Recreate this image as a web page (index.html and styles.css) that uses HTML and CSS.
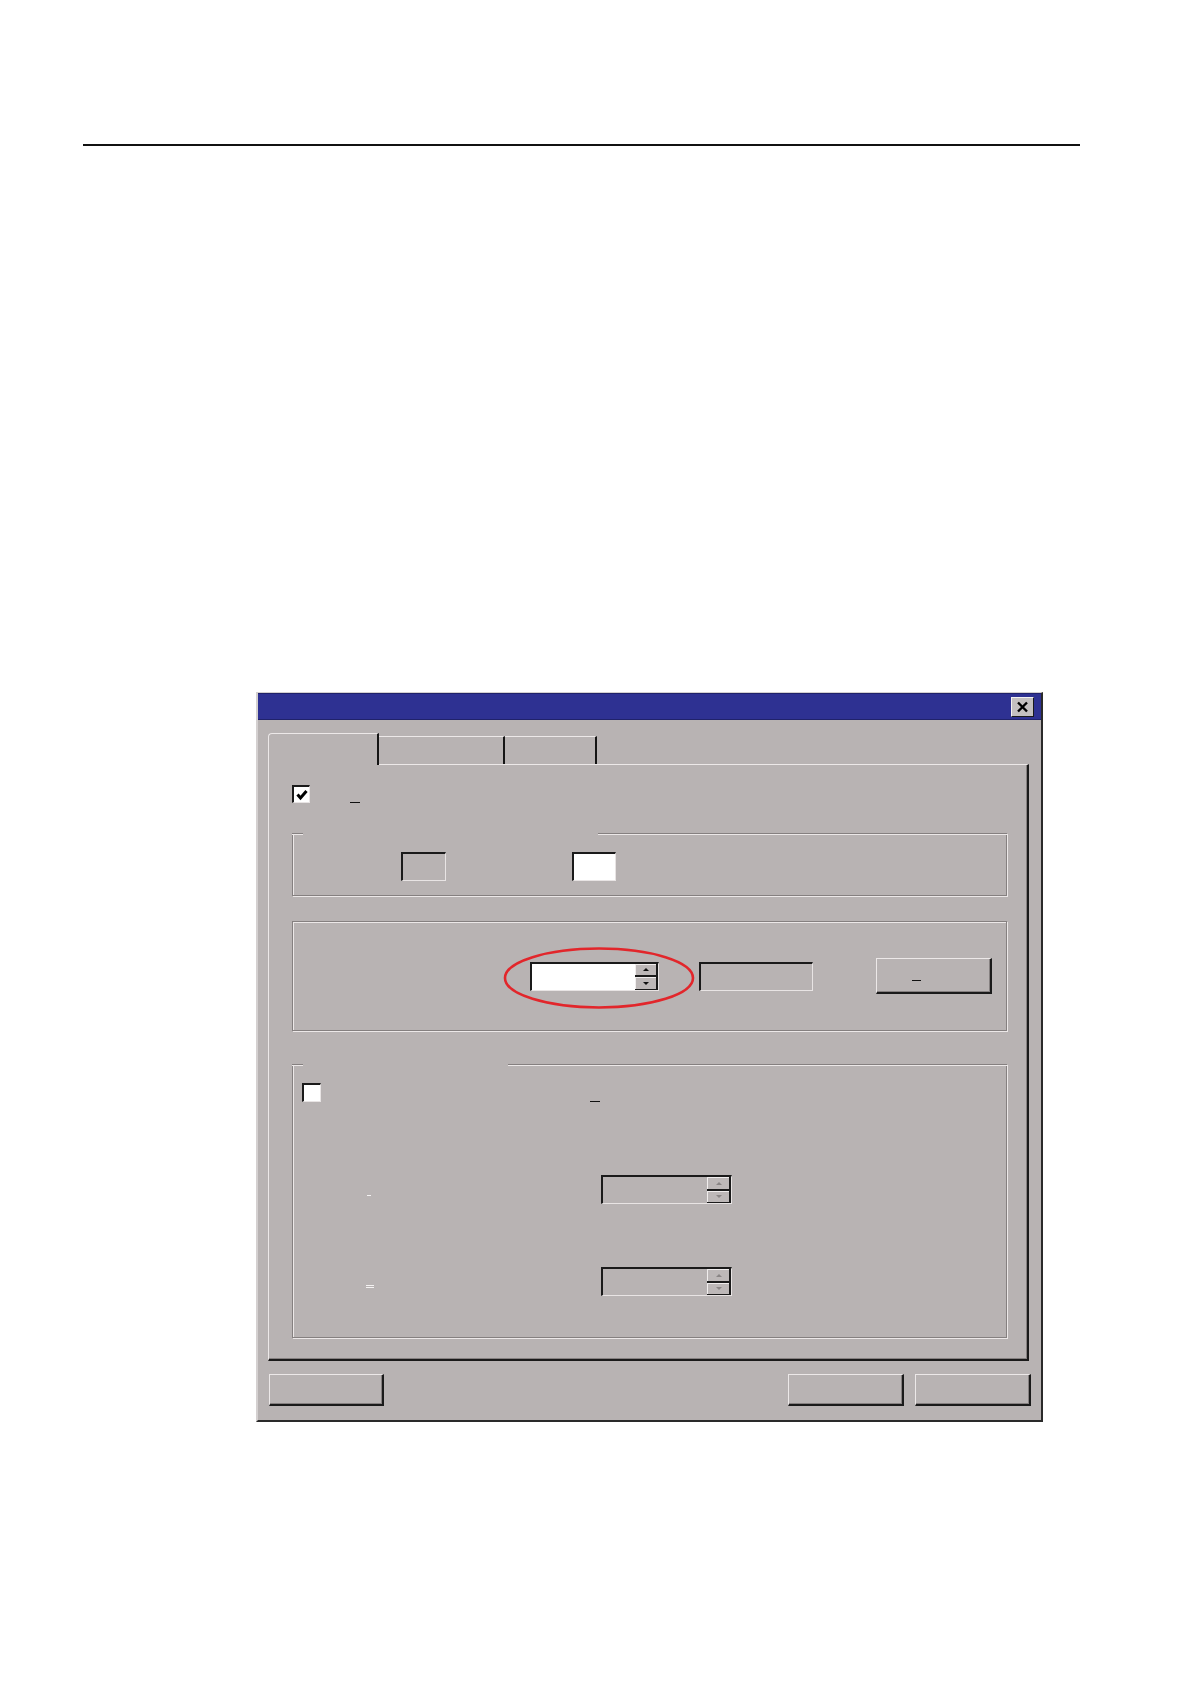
FILE: index.html
```html
<!DOCTYPE html>
<html>
<head>
<meta charset="utf-8">
<link rel="stylesheet" href="styles.css">
</head>
<body>
<div class="rule"></div>
<div class="dialog">
  <div class="titlebar">
    <button class="close"><svg width="13" height="12" viewBox="0 0 13 12"><path d="M2 1.5 L11 10.5 M11 1.5 L2 10.5" stroke="#000" stroke-width="2.4" fill="none"/></svg></button>
  </div>
  <div class="tabs">
    <div class="tab active"></div>
    <div class="tab t2"></div>
    <div class="tab t3"></div>
  </div>
  <div class="panel">
    <div class="chkrow">
      <span class="chk"><svg width="14" height="14" viewBox="0 0 14 14"><path d="M2.5 6.5 L5.5 10 L11.5 3" stroke="#000" stroke-width="3" fill="none"/></svg></span>
      <span class="mn m1"></span>
    </div>
    <div class="group g1">
      <div class="gtop"><i class="ln a"></i><i class="sp s1"></i><i class="ln b"></i></div>
      <div class="g1row">
        <span class="field box1"></span>
        <span class="field box2"></span>
      </div>
    </div>
    <div class="group full g2">
      <div class="g2row">
        <div class="spin white">
          <span class="txt"></span>
          <span class="btns"><i class="sb up"></i><i class="sb down"></i></span>
        </div>
        <span class="field box3"></span>
        <button class="btn wide"><span class="mn m2"></span></button>
      </div>
      <svg class="ellipse" width="196" height="66" viewBox="0 0 196 66"><ellipse cx="97" cy="33" rx="94" ry="29.5" fill="none" stroke="#e2262b" stroke-width="2.6"/></svg>
    </div>
    <div class="group g3">
      <div class="gtop"><i class="ln a"></i><i class="sp s3"></i><i class="ln b"></i></div>
      <div class="r3 first">
        <span class="chk"></span>
        <span class="mn m3"></span>
      </div>
      <div class="r3 second">
        <span class="wd d1"></span>
        <div class="spin gray s2">
          <span class="txt"></span>
          <span class="btns"><i class="sb up dis"></i><i class="sb down dis"></i></span>
        </div>
      </div>
      <div class="r3 third">
        <span class="wd d2"></span>
        <div class="spin gray s2">
          <span class="txt"></span>
          <span class="btns"><i class="sb up dis"></i><i class="sb down dis"></i></span>
        </div>
      </div>
    </div>
  </div>
  <div class="footer">
    <button class="btn fb"></button>
    <span class="grow"></span>
    <button class="btn fb"></button>
    <button class="btn fb"></button>
  </div>
</div>
</body>
</html>
```
FILE: styles.css
```css
body {
  margin: 0;
  background: #fff;
  font-family: "Liberation Sans", Arial, sans-serif;
}
.rule {
  margin: 144px 0 0 83px;
  width: 997px;
  border-top: 2px solid #111;
}
.dialog {
  margin: 546px 0 0 256px;
  width: 787px;
  box-sizing: border-box;
  background: #b8b3b3;
  border-style: solid;
  border-width: 1px 2px 2px 2px;
  border-color: #d4d0d0 #2a2a2a #2a2a2a #d4d0d0;
  display: flex;
  flex-direction: column;
  padding-bottom: 14px;
}
.titlebar {
  height: 27px;
  box-sizing: border-box;
  background: #2e3192;
  border-top: 1px solid #20226a;
  border-bottom: 1px solid #20226a;
  display: flex;
  justify-content: flex-end;
  align-items: center;
  padding-right: 7px;
}
.close {
  width: 23px;
  height: 20px;
  box-sizing: border-box;
  padding: 0;
  background: #c4c0c0;
  border: 1px solid;
  border-color: #f4f2f2 #1a1a1a #1a1a1a #f4f2f2;
  display: flex;
  align-items: center;
  justify-content: center;
}
.tabs {
  display: flex;
  align-items: flex-end;
  height: 31px;
  margin: 13px 0 0 10px;
}
.tab {
  box-sizing: border-box;
  height: 28px;
  border-top: 1px solid #ece8e8;
  border-right: 2px solid #151515;
}
.tab.active {
  width: 111px;
  height: 32px;
  margin-bottom: -1px;
  position: relative;
  z-index: 1;
  background: #b8b3b3;
  border-left: 1px solid #ece8e8;
  border-top-left-radius: 4px;
}
.tab.t2 { width: 126px; }
.tab.t3 { width: 92px; }
.panel {
  margin-left: 10px;
  width: 761px;
  height: 597px;
  box-sizing: border-box;
  border-style: solid;
  border-width: 1px 2px 2px 1px;
  border-color: #ece8e8 #1a1a1a #1a1a1a #ece8e8;
  box-shadow: inset -1px -1px 0 #858080;
  padding: 20px 20px 0 23px;
}
.chkrow {
  display: flex;
  align-items: flex-end;
  height: 18px;
}
.chk {
  width: 18px;
  height: 18px;
  box-sizing: border-box;
  background: #fff;
  border-style: solid;
  border-width: 2px 1px 1px 2px;
  border-color: #1a1a1a #e8e4e4 #e8e4e4 #1a1a1a;
  display: flex;
  align-items: center;
  justify-content: center;
}
.mn {
  display: block;
  width: 10px;
  height: 0;
  border-bottom: 1px solid #111;
}
.m1 { margin-left: 40px; margin-bottom: 0; }
.group {
  box-sizing: border-box;
  width: 715px;
  border: 1px solid #858080;
  border-top: none;
  box-shadow: 1px 1px 0 #ece8e8, inset 1px 0 0 #ece8e8;
}
.group.full {
  border-top: 1px solid #858080;
  box-shadow: 1px 1px 0 #ece8e8, inset 1px 1px 0 #ece8e8;
}
.gtop {
  display: flex;
  height: 2px;
  margin: 0 -1px;
}
.ln {
  box-sizing: border-box;
  height: 2px;
  border-top: 1px solid #858080;
  border-bottom: 1px solid #ece8e8;
}
.ln.a { width: 11px; }
.ln.b { flex: 1; }
.sp.s1 { width: 295px; }
.sp.s3 { width: 205px; }
.g1 {
  margin-top: 30px;
  height: 63px;
}
.g1row {
  display: flex;
  padding: 17px 0 0 108px;
  gap: 126px;
}
.field {
  display: block;
  height: 29px;
  box-sizing: border-box;
  border-style: solid;
  border-width: 2px 1px 1px 2px;
  border-color: #1a1a1a #e8e4e4 #e8e4e4 #1a1a1a;
}
.box1 { width: 45px; }
.box2 { width: 44px; background: #fff; }
.box3 { width: 114px; }
.g2 {
  margin-top: 25px;
  height: 110px;
  position: relative;
}
.g2row {
  display: flex;
  align-items: center;
  padding: 36px 0 0 237px;
  height: 36px;
}
.g2row .field { margin-left: 40px; }
.spin {
  display: flex;
  width: 129px;
  height: 29px;
  box-sizing: border-box;
  border-style: solid;
  border-width: 2px 1px 1px 2px;
  border-color: #1a1a1a #e8e4e4 #e8e4e4 #1a1a1a;
}
.spin.white { background: #fff; }
.spin.gray { background: #b8b3b3; }
.spin.s2 { width: 131px; }
.spin .txt { flex: 1; }
.btns {
  display: flex;
  flex-direction: column;
  width: 23px;
  box-sizing: border-box;
  background: #1a1a1a;
  padding: 0 2px 1px 0;
  gap: 2px;
}
.spin.gray .btns { width: 24px; }
.sb {
  flex: 1;
  box-sizing: border-box;
  background: #bdb8b8;
  border-top: 1px solid #f0eded;
  border-left: 1px solid #f0eded;
  display: flex;
  align-items: center;
  justify-content: center;
}
.sb::after {
  content: "";
  width: 0;
  height: 0;
  border-left: 3px solid transparent;
  border-right: 3px solid transparent;
}
.sb.up::after { border-bottom: 3px solid #111; }
.sb.down::after { border-top: 3px solid #111; }
.sb.dis.up::after { border-bottom-color: #8a8585; }
.sb.dis.down::after { border-top-color: #8a8585; }
.btn {
  box-sizing: border-box;
  padding: 0;
  background: #b8b3b3;
  border-style: solid;
  border-width: 1px 2px 2px 1px;
  border-color: #ece8e8 #1a1a1a #1a1a1a #ece8e8;
  box-shadow: inset -1px -1px 0 #858080;
}
.btn.wide {
  width: 116px;
  height: 36px;
  margin-left: 63px;
  display: flex;
  justify-content: flex-start;
  align-items: flex-end;
  padding: 0 0 11px 35px;
}
.m2 { width: 9px; }
.ellipse {
  position: absolute;
  left: 209px;
  top: 23px;
}
.g3 {
  margin-top: 33px;
  height: 274px;
}
.r3 {
  display: flex;
  align-items: flex-end;
}
.r3.first {
  padding: 17px 0 0 9px;
}
.r3.first .chk { width: 19px; height: 19px; }
.m3 { margin-left: 269px; }
.r3.second { margin-top: 73px; }
.r3.third { margin-top: 63px; }
.wd {
  display: block;
  margin-left: 74px;
  margin-bottom: 8px;
  width: 4px;
  height: 1px;
  background: #f4f2f2;
}
.wd.d2 {
  margin-left: 73px;
  margin-bottom: 8px;
  width: 8px;
  height: 1px;
  border-top: 1px solid #f4f2f2;
  border-bottom: 1px solid #f4f2f2;
  background: transparent;
}
.d1 + .spin { margin-left: 230px; }
.d2 + .spin { margin-left: 227px; }
.footer {
  display: flex;
  gap: 11px;
  margin-top: 13px;
  padding: 0 10px 0 11px;
}
.grow { flex: 1; }
.btn.fb {
  width: 115px;
  height: 32px;
}
.footer .btn.fb:nth-child(3),
.footer .btn.fb:nth-child(4) { width: 116px; }
```
